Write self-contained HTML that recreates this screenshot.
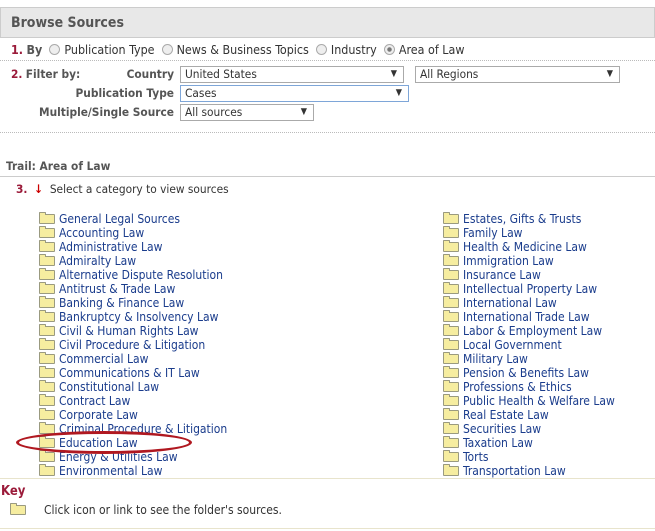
<!DOCTYPE html>
<html><head><style>
body{margin:0;width:655px;height:531px;overflow:hidden;background:#fff;font-family:"DejaVu Sans Condensed","Liberation Sans",sans-serif;font-size:11.8px;color:#333;position:relative}
.a{position:absolute;white-space:nowrap}
.hdr{position:absolute;left:0;top:7px;width:655px;height:31px;background:#e8e8e8;border:1px solid #ccc;box-sizing:border-box}
.hdr b{position:absolute;left:10px;top:7px;font-size:14px;color:#555}
.num{color:#9b1b3a;font-weight:bold}
.lbl{font-weight:bold;color:#555;text-align:right}
.rad{display:inline-block;width:11px;height:11px;border:1px solid #aaa;border-radius:50%;background:#eee;vertical-align:-1px;margin-right:4px;box-sizing:border-box;position:relative}
.sel{position:absolute;height:17px;border:1px solid #aaa;box-sizing:border-box;background:#fff;font-size:11.8px;padding-left:4px;line-height:15px}
.sel i{position:absolute;right:6px;top:0;font-style:normal;font-size:9px}
.dot{position:absolute;left:0;width:655px;border-top:1px dotted #bbb}
.list{position:absolute;top:212px;line-height:14px}
.list div{height:14px;position:relative;padding-left:20px;color:#1a3c8c;font-size:12px}
.f{position:absolute;left:0;top:2px;width:16px;height:10px;background:#f6eda0;border:1px solid #9a9a80;border-radius:1px;box-sizing:border-box}
.f:before{content:"";position:absolute;left:-1px;top:-3px;width:7px;height:3px;background:#f6eda0;border:1px solid #9a9a80;border-bottom:none;border-radius:1px 1px 0 0;box-sizing:border-box}
</style></head><body>
<div class="hdr"><b>Browse Sources</b></div>
<div class="a" style="left:11px;top:42px;font-size:12.4px"><span class="num">1.</span> <b style="color:#555">By</b> &nbsp;<span class="rad"></span>Publication Type &nbsp;<span class="rad"></span>News &amp; Business Topics &nbsp;<span class="rad"></span>Industry &nbsp;<span class="rad" style="background:radial-gradient(#777 30%,#eee 40%)"></span>Area of Law</div>
<div class="dot" style="top:60px"></div>
<div class="a" style="left:11px;top:67px"><span class="num">2.</span> <b style="color:#555">Filter by:</b></div>
<div class="a lbl" style="right:481px;top:67px">Country</div>
<div class="a lbl" style="right:481px;top:86px">Publication Type</div>
<div class="a lbl" style="right:481px;top:105px">Multiple/Single Source</div>
<div class="sel" style="left:180px;top:66px;width:224px">United States<i>▼</i></div>
<div class="sel" style="left:415px;top:66px;width:205px">All Regions<i>▼</i></div>
<div class="sel" style="left:180px;top:85px;width:229px;border-color:#7ea6d8">Cases<i>▼</i></div>
<div class="sel" style="left:180px;top:104px;width:134px">All sources<i>▼</i></div>
<div class="dot" style="top:132px"></div>
<div class="a" style="left:6px;top:159px;font-weight:bold;color:#555">Trail: Area of Law</div>
<div style="position:absolute;left:0;top:176px;width:655px;border-top:1px solid #ccc"></div>
<div class="a" style="left:16px;top:182px"><span class="num">3.</span> &nbsp;<span style="color:#c00;font-weight:bold">↓</span> &nbsp;Select a category to view sources</div>
<div class="list" style="left:39px">
<div><span class="f"></span>General Legal Sources</div><div><span class="f"></span>Accounting Law</div><div><span class="f"></span>Administrative Law</div><div><span class="f"></span>Admiralty Law</div><div><span class="f"></span>Alternative Dispute Resolution</div><div><span class="f"></span>Antitrust &amp; Trade Law</div><div><span class="f"></span>Banking &amp; Finance Law</div><div><span class="f"></span>Bankruptcy &amp; Insolvency Law</div><div><span class="f"></span>Civil &amp; Human Rights Law</div><div><span class="f"></span>Civil Procedure &amp; Litigation</div><div><span class="f"></span>Commercial Law</div><div><span class="f"></span>Communications &amp; IT Law</div><div><span class="f"></span>Constitutional Law</div><div><span class="f"></span>Contract Law</div><div><span class="f"></span>Corporate Law</div><div><span class="f"></span>Criminal Procedure &amp; Litigation</div><div><span class="f"></span>Education Law</div><div><span class="f"></span>Energy &amp; Utilities Law</div><div><span class="f"></span>Environmental Law</div>
</div>
<div class="list" style="left:443px">
<div><span class="f"></span>Estates, Gifts &amp; Trusts</div><div><span class="f"></span>Family Law</div><div><span class="f"></span>Health &amp; Medicine Law</div><div><span class="f"></span>Immigration Law</div><div><span class="f"></span>Insurance Law</div><div><span class="f"></span>Intellectual Property Law</div><div><span class="f"></span>International Law</div><div><span class="f"></span>International Trade Law</div><div><span class="f"></span>Labor &amp; Employment Law</div><div><span class="f"></span>Local Government</div><div><span class="f"></span>Military Law</div><div><span class="f"></span>Pension &amp; Benefits Law</div><div><span class="f"></span>Professions &amp; Ethics</div><div><span class="f"></span>Public Health &amp; Welfare Law</div><div><span class="f"></span>Real Estate Law</div><div><span class="f"></span>Securities Law</div><div><span class="f"></span>Taxation Law</div><div><span class="f"></span>Torts</div><div><span class="f"></span>Transportation Law</div>
</div>
<div style="position:absolute;left:16px;top:431px;width:176px;height:23px;border:3px solid #b01820;border-radius:50%;box-sizing:border-box"></div>
<div style="position:absolute;left:0;top:478px;width:655px;border-top:1px solid #e8e4cc"></div>
<div class="a" style="left:1px;top:484px;font-weight:bold;color:#9b1b3a;font-size:13px">Key</div>
<div class="list" style="left:10px;top:503px"><div style="color:#333;padding-left:34px"><span class="f"></span>Click icon or link to see the folder's sources.</div></div>
<div style="position:absolute;left:0;top:528px;width:655px;border-top:1px solid #e8e4cc"></div>
</body></html>
